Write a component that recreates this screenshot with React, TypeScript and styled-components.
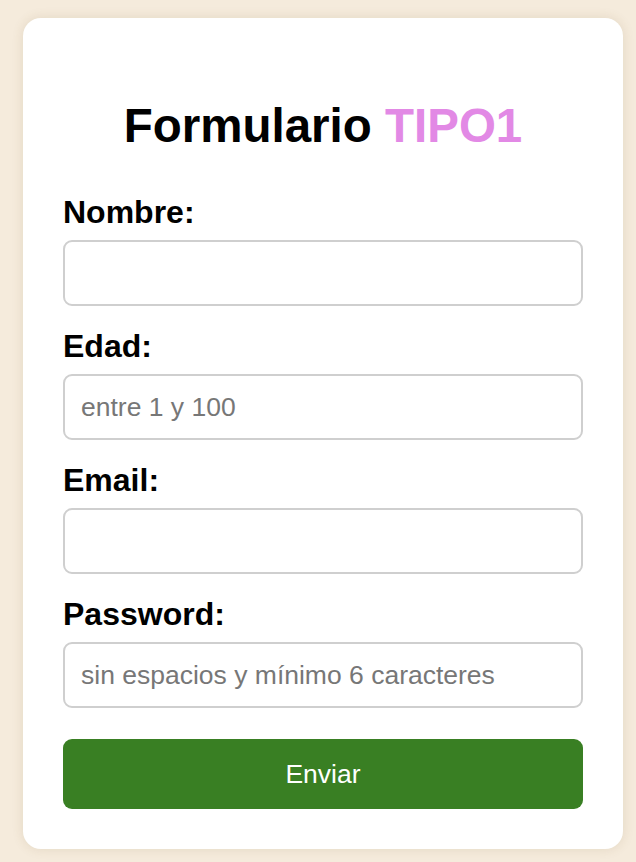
import React from "react";
import styled, { createGlobalStyle } from "styled-components";

const GlobalStyle = createGlobalStyle`
  html, body {
    margin: 0;
    padding: 0;
    background: #f5ebdc;
  }
  body {
    font-family: "Liberation Sans", Arial, sans-serif;
  }
  * { box-sizing: border-box; }
`;

const Page = styled.div`
  min-height: 862px;
  padding: 18px 13px 12px 23px;
  background: #f5ebdc;
`;

const Card = styled.form`
  width: 600px;
  background: #ffffff;
  border-radius: 18px;
  box-shadow: 0 0 12px rgba(120, 90, 40, 0.14);
  padding: 80px 40px 40px;
  display: flex;
  flex-direction: column;
`;

const Title = styled.h1`
  margin: 0 0 40px;
  text-align: center;
  font-size: 47.5px;
  line-height: 56px;
  font-weight: 700;
  color: #000;
`;

const Accent = styled.span`
  color: #e289e5;
`;

const Field = styled.div`
  display: flex;
  flex-direction: column;
  margin-bottom: 22px;
`;

const Label = styled.label`
  font-size: 32px;
  line-height: 36px;
  font-weight: 700;
  color: #000;
  margin-bottom: 10px;
`;

const Input = styled.input`
  height: 66px;
  width: 100%;
  border: 2px solid #cfcfcf;
  border-radius: 9px;
  padding: 0 16px;
  font-family: "Liberation Sans", Arial, sans-serif;
  font-size: 26.5px;
  color: #000;
  background: #fff;
  outline: none;
  &::placeholder {
    color: #777777;
  }
`;

const Button = styled.button`
  margin-top: 9px;
  height: 70px;
  width: 100%;
  border: none;
  border-radius: 9px;
  background: #397f23;
  color: #fff;
  font-family: "Liberation Sans", Arial, sans-serif;
  font-size: 26.5px;
  cursor: pointer;
`;

const fields = [
  { id: "nombre", label: "Nombre:", type: "text", placeholder: "" },
  { id: "edad", label: "Edad:", type: "text", placeholder: "entre 1 y 100" },
  { id: "email", label: "Email:", type: "email", placeholder: "" },
  {
    id: "password",
    label: "Password:",
    type: "password",
    placeholder: "sin espacios y mínimo 6 caracteres",
  },
];

export default function App() {
  return (
    <>
      <GlobalStyle />
      <Page>
        <Card onSubmit={(e) => e.preventDefault()}>
          <Title>
            Formulario <Accent>TIPO1</Accent>
          </Title>
          {fields.map((f) => (
            <Field key={f.id}>
              <Label htmlFor={f.id}>{f.label}</Label>
              <Input id={f.id} type={f.type} placeholder={f.placeholder} />
            </Field>
          ))}
          <Button type="submit">Enviar</Button>
        </Card>
      </Page>
    </>
  );
}
